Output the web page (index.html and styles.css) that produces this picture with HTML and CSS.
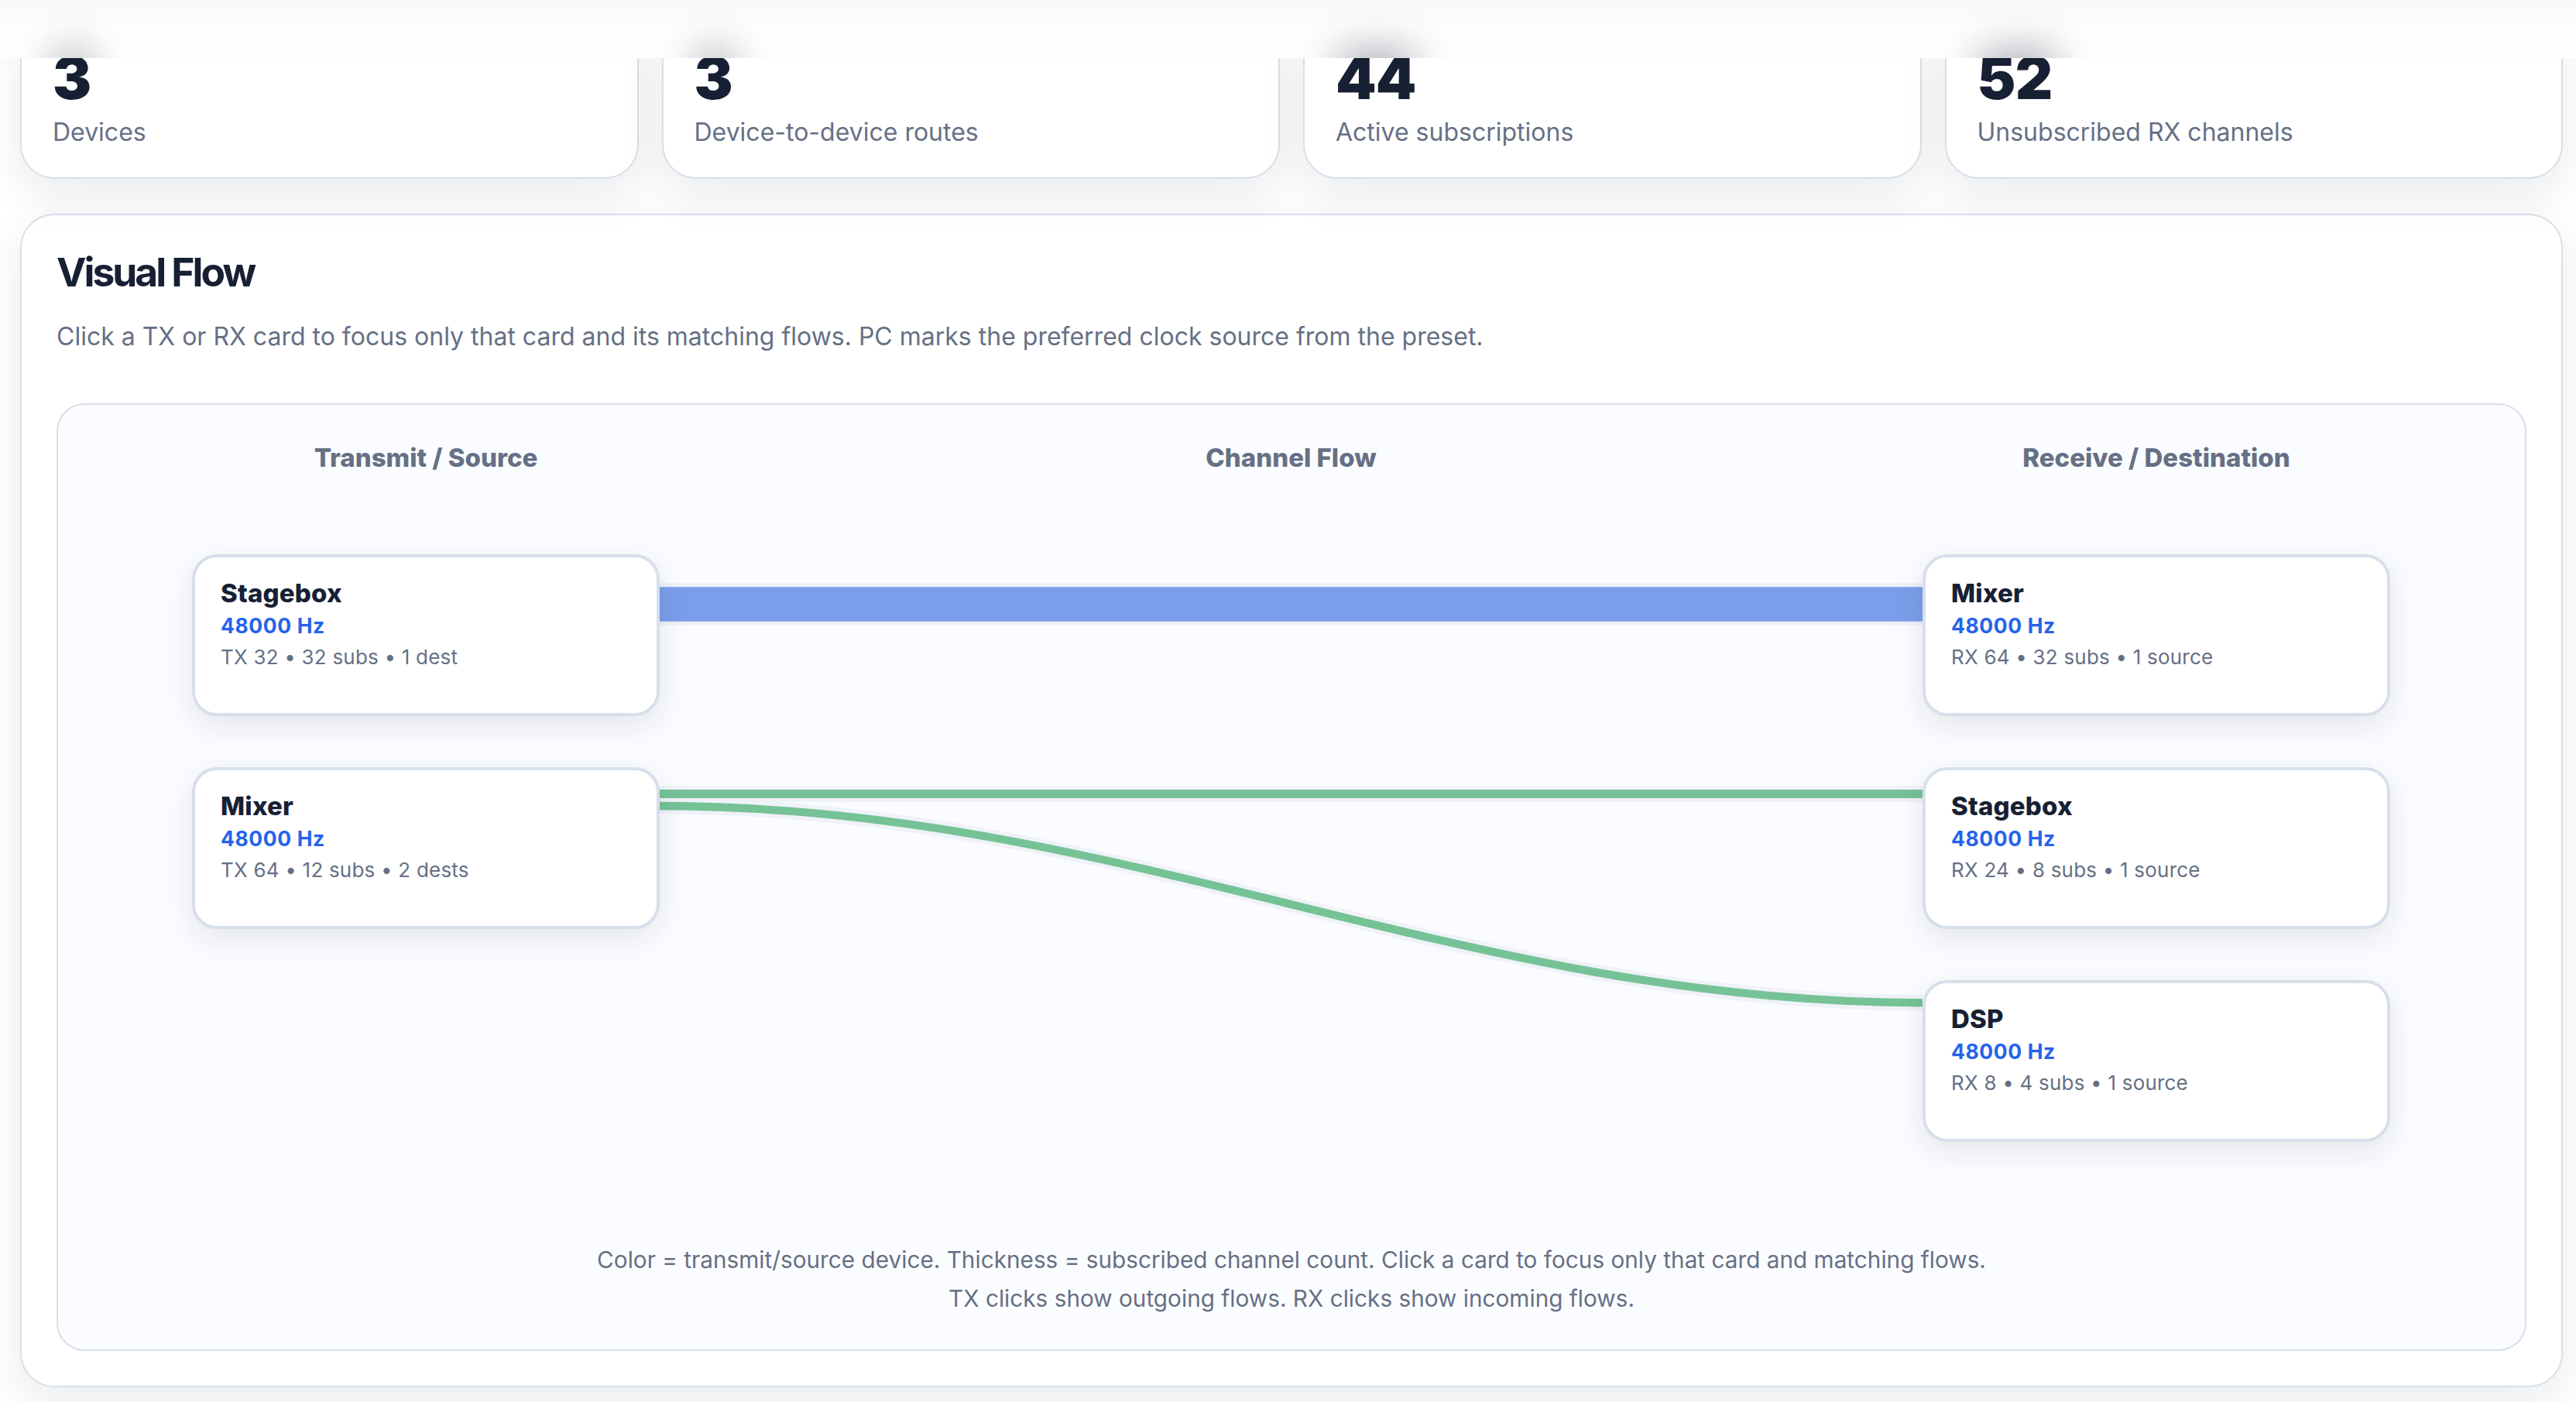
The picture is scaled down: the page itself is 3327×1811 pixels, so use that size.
FILE: index.html
```html
<!DOCTYPE html>
<html lang="en">
<head>
<meta charset="utf-8">
<title>Visual Flow</title>
<link rel="stylesheet" href="styles.css">
</head>
<body>
<header class="topbar">
  <div class="frost"><i class="smudge"></i></div>
  <div class="frost"><i class="smudge"></i></div>
  <div class="frost"><i class="smudge smudge-wide"></i></div>
  <div class="frost"><i class="smudge smudge-wide"></i></div>
</header>
<main class="page">
  <section class="stats">
    <article class="stat"><div class="stat-value">3</div><div class="stat-label">Devices</div></article>
    <article class="stat"><div class="stat-value">3</div><div class="stat-label">Device-to-device routes</div></article>
    <article class="stat"><div class="stat-value">44</div><div class="stat-label">Active subscriptions</div></article>
    <article class="stat"><div class="stat-value">52</div><div class="stat-label">Unsubscribed RX channels</div></article>
  </section>
  <section class="panel">
    <h2 class="panel-title">Visual Flow</h2>
    <p class="panel-text">Click a TX or RX card to focus only that card and its matching flows. PC marks the preferred clock source from the preset.</p>
    <div class="diagram">
      <div class="columns headings">
        <div>Transmit / Source</div>
        <div>Channel Flow</div>
        <div>Receive / Destination</div>
      </div>
      <div class="columns canvas">
        <div class="nodes">
          <div class="node"><div class="node-name">Stagebox</div><div class="node-rate">48000 Hz</div><div class="node-meta">TX 32 • 32 subs • 1 dest</div></div>
          <div class="node"><div class="node-name">Mixer</div><div class="node-rate">48000 Hz</div><div class="node-meta">TX 64 • 12 subs • 2 dests</div></div>
        </div>
        <svg class="flows" viewBox="0 0 1631 759" fill="none">
          <g class="halo">
            <path d="M0 64.5H1631" stroke-width="55"/>
            <path d="M0 309.5H1631" stroke-width="21"/>
            <path d="M0 325C599 325 1032 579.3 1631 579.3" stroke-width="20.5"/>
          </g>
          <path class="flow-blue" d="M0 64.5H1631" stroke-width="44.5"/>
          <path class="flow-green" d="M0 309.5H1631" stroke-width="11"/>
          <path class="flow-green" d="M0 325C599 325 1032 579.3 1631 579.3" stroke-width="10.3"/>
        </svg>
        <div class="nodes">
          <div class="node"><div class="node-name">Mixer</div><div class="node-rate">48000 Hz</div><div class="node-meta">RX 64 • 32 subs • 1 source</div></div>
          <div class="node"><div class="node-name">Stagebox</div><div class="node-rate">48000 Hz</div><div class="node-meta">RX 24 • 8 subs • 1 source</div></div>
          <div class="node"><div class="node-name">DSP</div><div class="node-rate">48000 Hz</div><div class="node-meta">RX 8 • 4 subs • 1 source</div></div>
        </div>
      </div>
      <p class="legend">Color = transmit/source device. Thickness = subscribed channel count. Click a card to focus only that card and matching flows.<br>TX clicks show outgoing flows. RX clicks show incoming flows.</p>
    </div>
  </section>
</main>
</body>
</html>
```
FILE: styles.css
```css
* { box-sizing: border-box; }
body {
  margin: 0;
  height: 1811px;
  overflow: hidden;
  background: #fff;
  color: #172033;
  font-family: Inter, "Liberation Sans", sans-serif;
}
h2, p { margin: 0; }

.topbar {
  position: fixed;
  inset: 0 0 auto 0;
  z-index: 10;
  height: 75px;
  padding: 0 17px 0 26px;
  display: grid;
  grid-template-columns: repeat(4, 1fr);
  gap: 30px;
  overflow: hidden;
  background: linear-gradient(#f9f9f9, #fcfcfc 26px, #fefefe 34px, #fefefe);
}
.frost { padding: 61px 0 0 44px; }
.smudge {
  display: block;
  width: 48px;
  height: 70px;
  background: rgba(23, 32, 51, .31);
  filter: blur(25px);
}
.smudge-wide { width: 100px; }

.page { padding: 16px 17px 0 26px; }
.stats {
  display: grid;
  grid-template-columns: repeat(4, 1fr);
  gap: 30px;
}
.stat {
  height: 215px;
  padding: 43px 40px 0;
  border: 2px solid #d8dfeb;
  border-radius: 44px;
  background: #fff;
  box-shadow: 0 20px 60px rgba(15, 23, 42, .085);
}
.stat-value { font-size: 75px; line-height: 80px; font-weight: 880; letter-spacing: -.8px; }
.stat-label { margin-top: 8px; font-size: 32px; line-height: 44px; color: #667085; }
.panel {
  height: 1516px;
  margin-top: 45px;
  padding: 43px 45px 45px;
  border: 2px solid #d8dfeb;
  border-radius: 44px;
  background: rgba(255, 255, 255, .75);
  box-shadow: 0 20px 60px rgba(15, 23, 42, .085);
}
.panel-title { font-size: 51.5px; line-height: 60px; font-weight: 730; letter-spacing: -3px; }
.panel-text { margin-top: 29px; font-size: 32px; line-height: 50px; color: #667085; }
.diagram {
  height: 1224px;
  margin-top: 61px;
  padding-top: 48px;
  border: 2px solid #d8dfeb;
  border-radius: 36px;
  background: #fbfcff;
}
.columns {
  display: grid;
  grid-template-columns: 604px 1631px 604px;
  justify-content: center;
  padding-right: 1px;
}
.headings { font-size: 33px; line-height: 40px; font-weight: 800; color: #667085; text-align: center; }
.canvas { height: 759px; margin-top: 105px; }
.nodes { position: relative; z-index: 1; display: flex; flex-direction: column; gap: 66px; }
.node {
  height: 209px;
  padding: 25px 33px 0;
  border: 4px solid #d8dfeb;
  border-radius: 32px;
  background: #fff;
  box-shadow: 0 12px 40px rgba(23, 32, 51, .1);
}
.node-name { font-size: 33px; line-height: 42px; font-weight: 760; letter-spacing: .2px; }
.node-rate { margin-top: 1px; font-size: 26.5px; line-height: 40px; font-weight: 700; letter-spacing: .6px; color: #2563eb; }
.node-meta { margin-top: 1px; font-size: 26px; line-height: 40px; letter-spacing: .2px; color: #667085; }
.flows { width: 1631px; height: 759px; }
.halo { stroke: #eff2f7; }
.flow-blue { stroke: #7c9eea; }
.flow-green { stroke: #75c296; }
.legend { margin-top: 127px; font-size: 29.75px; line-height: 50px; color: #667085; text-align: center; }
```
